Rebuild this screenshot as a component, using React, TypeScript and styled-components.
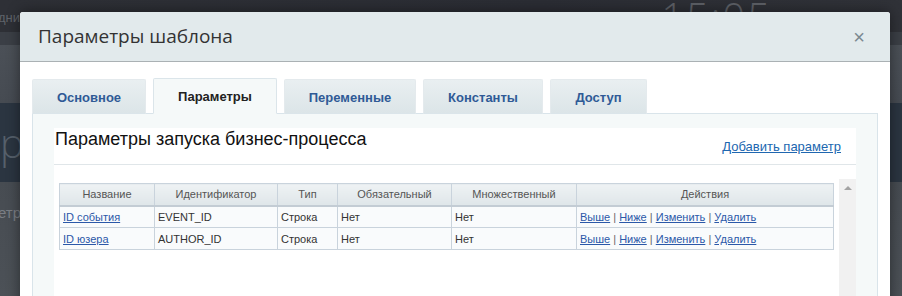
import React from 'react';
import styled, { createGlobalStyle } from 'styled-components';

const GlobalStyle = createGlobalStyle`
  html, body {
    margin: 0;
    padding: 0;
    background: #2c2e35;
  }
  * {
    box-sizing: border-box;
  }
`;

interface Param {
  name: string;
  id: string;
  type: string;
  required: string;
  multiple: string;
}

const PARAMS: Param[] = [
  { name: 'ID события', id: 'EVENT_ID', type: 'Строка', required: 'Нет', multiple: 'Нет' },
  { name: 'ID юзера', id: 'AUTHOR_ID', type: 'Строка', required: 'Нет', multiple: 'Нет' },
];

const TABS = [
  { label: 'Основное', width: 114 },
  { label: 'Параметры', width: 124 },
  { label: 'Переменные', width: 132 },
  { label: 'Константы', width: 120 },
  { label: 'Доступ', width: 97 },
];

const COLUMNS = [
  { label: 'Название', width: 95 },
  { label: 'Идентификатор', width: 123 },
  { label: 'Тип', width: 60 },
  { label: 'Обязательный', width: 114 },
  { label: 'Множественный', width: 125 },
  { label: 'Действия', width: 257 },
];

const ACTIONS = ['Выше', 'Ниже', 'Изменить', 'Удалить'];

const App: React.FC = () => {
  return (
    <Screen>
      <GlobalStyle />
      <Backdrop>
        <TopBand>
          <FadedSmall>дни</FadedSmall>
          <Clock>15:05</Clock>
        </TopBand>
        <Band $bg="#3b3f46" $h={13} />
        <Band $bg="linear-gradient(180deg, #4b5057 0%, #464b52 100%)" $h={58} />
        <Band $bg="#2b3541" $h={79}>
          <FadedBig>ро</FadedBig>
        </Band>
        <Band $bg="linear-gradient(180deg, #474c52 0%, #4c5157 100%)" $h={114}>
          <FadedMid>етр</FadedMid>
        </Band>
      </Backdrop>

      <Modal>
        <ModalHeader>
          <ModalTitle>Параметры шаблона</ModalTitle>
          <CloseButton>×</CloseButton>
        </ModalHeader>
        <ModalBody>
          <TabBar>
            {TABS.map((tab, i) => (
              <Tab key={tab.label} $active={i === 1} $w={tab.width}>
                {tab.label}
              </Tab>
            ))}
          </TabBar>
          <Panel>
            <Sheet>
              <SheetHeader>
                <SheetTitle>Параметры запуска бизнес-процесса</SheetTitle>
                <AddLink href="#">Добавить параметр</AddLink>
              </SheetHeader>
              <ScrollArea>
                <TableWrap>
                  <Table>
                    <colgroup>
                      {COLUMNS.map((c) => (
                        <col key={c.label} style={{ width: c.width }} />
                      ))}
                    </colgroup>
                    <thead>
                      <tr>
                        {COLUMNS.map((c) => (
                          <HeadCell key={c.label}>{c.label}</HeadCell>
                        ))}
                      </tr>
                    </thead>
                    <tbody>
                      {PARAMS.map((p) => (
                        <tr key={p.id}>
                          <Cell>
                            <TableLink href="#">{p.name}</TableLink>
                          </Cell>
                          <Cell>{p.id}</Cell>
                          <Cell>{p.type}</Cell>
                          <Cell>{p.required}</Cell>
                          <Cell>{p.multiple}</Cell>
                          <Cell>
                            {ACTIONS.map((a, i) => (
                              <React.Fragment key={a}>
                                {i > 0 && <Divider> | </Divider>}
                                <TableLink href="#">{a}</TableLink>
                              </React.Fragment>
                            ))}
                          </Cell>
                        </tr>
                      ))}
                    </tbody>
                  </Table>
                </TableWrap>
                <Scrollbar>
                  <ScrollArrow />
                </Scrollbar>
              </ScrollArea>
            </Sheet>
          </Panel>
        </ModalBody>
      </Modal>
    </Screen>
  );
};

export default App;

const Screen = styled.div`
  position: relative;
  width: 902px;
  height: 296px;
  overflow: hidden;
  font-family: Arial, 'Liberation Sans', sans-serif;
`;

const Backdrop = styled.div`
  display: flex;
  flex-direction: column;
  height: 100%;
`;

const Band = styled.div<{ $bg: string; $h: number }>`
  height: ${({ $h }) => $h}px;
  background: ${({ $bg }) => $bg};
  display: flex;
  align-items: center;
  overflow: hidden;
`;

const TopBand = styled.div`
  height: 32px;
  background: linear-gradient(90deg, #2e3036 0%, #2b2d34 60%, #303238 100%);
  display: flex;
  align-items: flex-start;
  justify-content: space-between;
  padding: 0 130px 0 0;
  overflow: hidden;
`;

const FadedSmall = styled.span`
  margin-top: 10px;
  margin-left: -2px;
  font-size: 13px;
  color: #5f636a;
`;

const Clock = styled.span`
  margin-top: -11px;
  font-family: 'Open Sans', 'Liberation Sans', sans-serif;
  font-weight: 300;
  font-size: 40px;
  letter-spacing: 2px;
  color: #5d6066;
`;

const FadedBig = styled.span`
  margin-left: 0;
  font-family: 'Open Sans', 'Liberation Sans', sans-serif;
  font-size: 40px;
  font-weight: 300;
  color: #56606b;
`;

const FadedMid = styled.span`
  align-self: flex-start;
  margin-top: 22px;
  margin-left: -2px;
  font-size: 15px;
  color: #7a7e84;
`;

const Modal = styled.div`
  position: absolute;
  left: 20px;
  top: 12px;
  width: 870px;
  height: 320px;
  background: #ffffff;
  border-radius: 3px 3px 0 0;
  box-shadow: 0 0 14px rgba(0, 0, 0, 0.45);
  display: flex;
  flex-direction: column;
`;

const ModalHeader = styled.div`
  height: 50px;
  flex-shrink: 0;
  display: flex;
  align-items: center;
  justify-content: space-between;
  padding: 0 25px 0 18px;
  background: #e2eaec;
  border-bottom: 1px solid #aab1b4;
  border-radius: 3px 3px 0 0;
`;

const ModalTitle = styled.div`
  font-family: 'Open Sans', 'Liberation Sans', sans-serif;
  font-size: 19px;
  color: #333333;
  margin-top: -2px;
`;

const CloseButton = styled.span`
  font-family: 'Liberation Sans', Arial, sans-serif;
  font-size: 20px;
  color: #7b8890;
  margin-top: 2px;
`;

const ModalBody = styled.div`
  flex: 1;
  display: flex;
  flex-direction: column;
  padding: 16px 12px 0 12px;
`;

const TabBar = styled.div`
  display: flex;
  gap: 7px;
  align-items: flex-end;
  position: relative;
  z-index: 1;
  margin-bottom: -1px;
`;

const Tab = styled.div<{ $active?: boolean; $w: number }>`
  width: ${({ $w }) => $w}px;
  height: ${({ $active }) => ($active ? 36 : 35)}px;
  display: flex;
  align-items: center;
  justify-content: center;
  padding-top: 1px;
  font-size: 13px;
  font-weight: bold;
  color: ${({ $active }) => ($active ? '#222222' : '#2f5a96')};
  background: ${({ $active }) =>
    $active ? '#f5f9f9' : 'linear-gradient(180deg, #e9eff1 0%, #dce5e8 100%)'};
  border: 1px solid ${({ $active }) => ($active ? '#dbe5ea' : '#e4eaed')};
  border-bottom: ${({ $active }) => ($active ? '1px solid #f5f9f9' : '1px solid #dbe5ea')};
  border-radius: 2px 2px 0 0;
`;

const Panel = styled.div`
  flex: 1;
  width: 846px;
  background: #f5f9f9;
  border: 1px solid #d9e4ea;
  padding: 14px 22px 0 21px;
  display: flex;
`;

const Sheet = styled.div`
  flex: 1;
  background: #ffffff;
  display: flex;
  flex-direction: column;
`;

const SheetHeader = styled.div`
  height: 37px;
  display: flex;
  align-items: flex-start;
  justify-content: space-between;
  padding: 0 15px 0 1px;
  border-bottom: 1px solid #e0e6e9;
`;

const SheetTitle = styled.div`
  font-size: 18px;
  color: #111111;
  margin-top: 1px;
`;

const AddLink = styled.a`
  font-size: 13px;
  color: #2067b0;
  text-decoration: underline;
  margin-top: 11px;
`;

const ScrollArea = styled.div`
  flex: 1;
  display: flex;
  margin-top: 14px;
`;

const TableWrap = styled.div`
  flex: 1;
  padding: 4px 5px 0 5px;
`;

const Table = styled.table`
  width: 775px;
  border-collapse: collapse;
  table-layout: fixed;
  font-size: 11px;
`;

const HeadCell = styled.th`
  height: 22px;
  padding: 0 3px;
  font-weight: normal;
  color: #555555;
  text-align: center;
  background: linear-gradient(180deg, #eef2f4 0%, #dfe6e9 100%);
  border: 1px solid #c9d3dc;
  border-bottom: 2px solid #c3ccd4;
`;

const Cell = styled.td`
  height: 22px;
  padding: 0 3px;
  color: #333333;
  background: #f9fbfc;
  border: 1px solid #c9d3dc;
  white-space: nowrap;
`;

const TableLink = styled.a`
  color: #2b58a8;
  text-decoration: underline;
`;

const Divider = styled.span`
  color: #666666;
`;

const Scrollbar = styled.div`
  width: 17px;
  background: #f1f1f1;
  display: flex;
  justify-content: center;
  padding-top: 7px;
`;

const ScrollArrow = styled.div`
  width: 0;
  height: 0;
  border-left: 4px solid transparent;
  border-right: 4px solid transparent;
  border-bottom: 4px solid #a3a3a3;
`;
